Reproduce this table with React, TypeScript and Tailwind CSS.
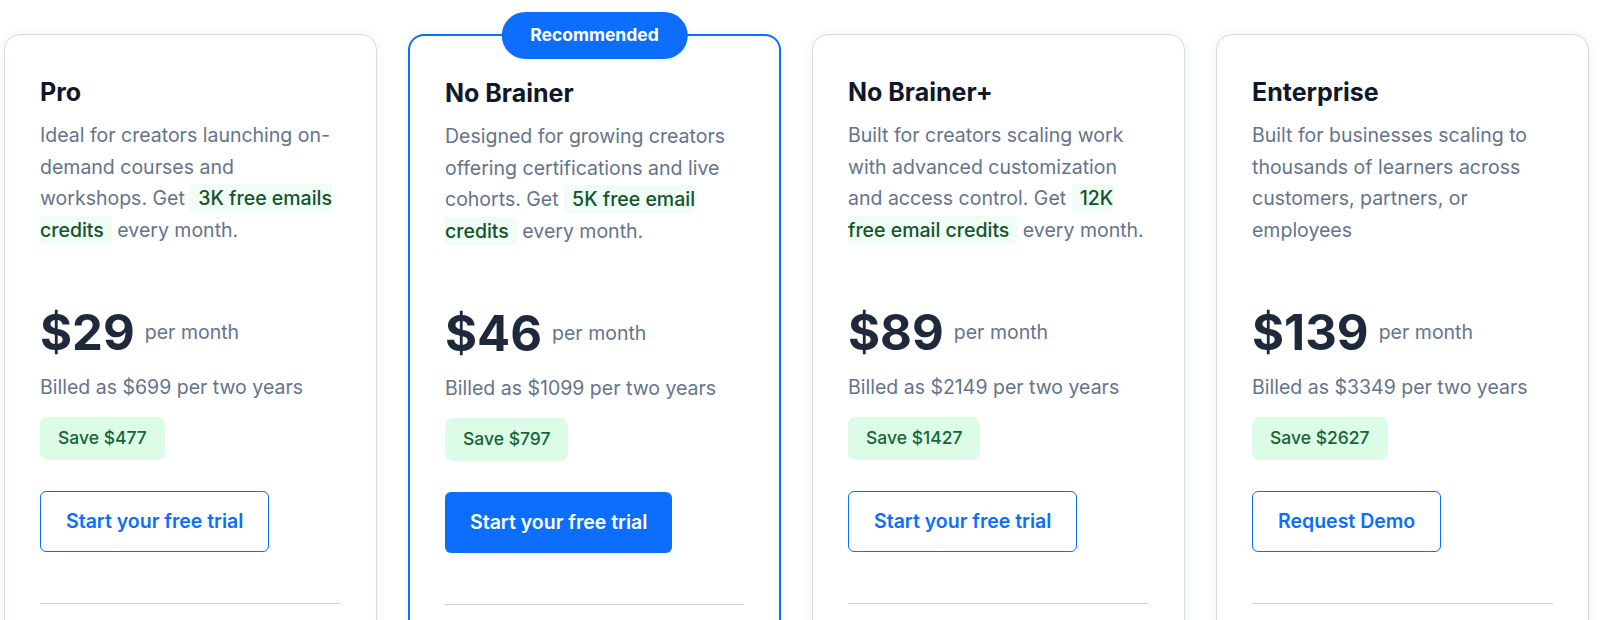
import React from "react";

interface Plan {
    name: string;
    before: string;
    credits?: string;
    after?: string;
    price: string;
    billed: string;
    save: string;
    cta: string;
    featured?: boolean;
}

const plans: Plan[] = [
    {
        name: "Pro",
        before: "Ideal for creators launching on-demand courses and workshops. Get ",
        credits: "3K free emails credits",
        after: " every month.",
        price: "$29",
        billed: "Billed as $699 per two years",
        save: "Save $477",
        cta: "Start your free trial",
    },
    {
        name: "No Brainer",
        before: "Designed for growing creators offering certifications and live cohorts. Get ",
        credits: "5K free email credits",
        after: " every month.",
        price: "$46",
        billed: "Billed as $1099 per two years",
        save: "Save $797",
        cta: "Start your free trial",
        featured: true,
    },
    {
        name: "No Brainer+",
        before: "Built for creators scaling work with advanced customization and access control. Get ",
        credits: "12K free email credits",
        after: " every month.",
        price: "$89",
        billed: "Billed as $2149 per two years",
        save: "Save $1427",
        cta: "Start your free trial",
    },
    {
        name: "Enterprise",
        before: "Built for businesses scaling to thousands of learners across customers, partners, or employees",
        price: "$139",
        billed: "Billed as $3349 per two years",
        save: "Save $2627",
        cta: "Request Demo",
    },
];

function PlanCard({ plan }: { plan: Plan }) {
    return (
        <div
            className={`relative w-[373px] shrink-0 rounded-2xl bg-white px-[35px] pt-[41px] pb-10 shadow-[0_0_12px_rgba(15,23,42,0.06)] ${
                plan.featured ? "border-2 border-[#0d6efd]" : "border border-[#d4dbe7]"
            }`}
        >
            {plan.featured && (
                <div className="absolute left-1/2 top-[-24px] flex h-[47px] -translate-x-1/2 items-center rounded-full bg-[#0d6efd] px-[29px] text-[17.5px] font-bold text-white">
                    Recommended
                </div>
            )}

            <h3 className="text-[25px] leading-[32px] font-bold text-[#0f172a]">{plan.name}</h3>

            <p className="mt-[12px] max-w-[297px] text-[19.5px] leading-[31.5px] text-[#64748b]">
                {plan.before}
                {plan.credits && (
                    <span className="rounded-[3px] bg-[#effdf4] px-2 py-[2px] font-medium text-[#14532d]">
                        {plan.credits}
                    </span>
                )}
                {plan.after}
            </p>

            <div className="mt-[62px] flex h-[48px] items-center gap-[10px]">
                <span className="text-[49px] leading-none font-bold text-[#1e293b]">{plan.price}</span>
                <span className="text-[19.5px] leading-[28px] text-[#64748b]">per month</span>
            </div>

            <div className="mt-[17px] text-[19.5px] leading-[28px] text-[#64748b]">{plan.billed}</div>

            <div className="mt-4 flex">
                <span className="flex h-[43px] items-center rounded-lg bg-[#dcfce7] px-[18px] text-[17.5px] font-medium text-[#166534]">
                    {plan.save}
                </span>
            </div>

            <div className="mt-[31px] flex">
                <button
                    className={`h-[61px] rounded-md px-[25px] text-[19.5px] font-semibold ${
                        plan.featured
                            ? "bg-[#0d6efd] text-white"
                            : "border border-[#0d6efd] bg-white text-[#0d6efd]"
                    }`}
                >
                    {plan.cta}
                </button>
            </div>

            <div className="mt-[51px] h-px bg-[#cbd5e1]" />
        </div>
    );
}

export default function App() {
    return (
        <div className="min-h-screen bg-white font-['Inter',sans-serif]">
            <div className="flex gap-[31px] pl-1 pt-[34px]">
                {plans.map((plan) => (
                    <PlanCard key={plan.name} plan={plan} />
                ))}
            </div>
        </div>
    );
}
